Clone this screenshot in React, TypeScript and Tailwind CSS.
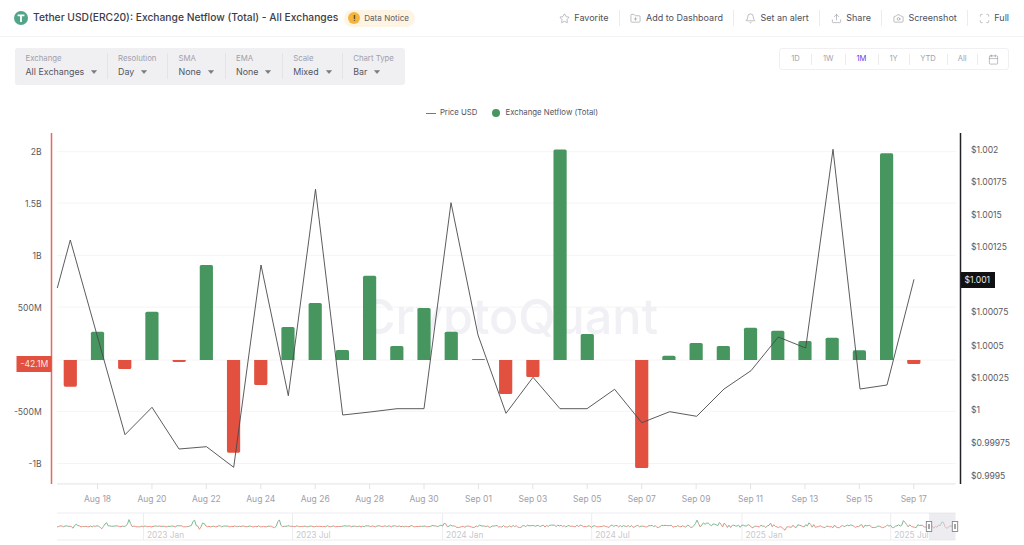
import { Star, FolderPlus, Bell, Upload, Camera, Scan, Calendar } from "lucide-react";

const X0 = 70.3;
const STEP = 27.21;
const ZERO = 360;
const bars: [number, number][] = [
  [0, 386.7], [1, 331.7], [2, 369], [3, 311.7], [4, 362], [5, 265], [6, 452.7], [7, 385],
  [8, 327], [9, 303], [10, 350], [11, 275.7], [12, 346], [13, 308], [14, 331.7], [15, 359],
  [16, 394], [17, 377], [18, 149.5], [19, 334], [21, 468], [22, 355.7], [23, 343], [24, 346],
  [25, 327.7], [26, 330.7], [27, 341], [28, 337.7], [29, 350.3], [30, 153.3], [31, 364],
];
const price: [number, number][] = [
  [57.3, 288], [70.3, 240], [125, 434.7], [152, 407.3], [179, 449], [206.5, 446.7], [233.7, 467.3],
  [261, 265], [288.3, 395.7], [315.5, 189.3], [342.7, 415], [370, 412], [397, 408.7], [424, 408.7],
  [451, 202.7], [478, 335], [506, 413.3], [533, 377.3], [560, 408.7], [587, 408.7], [614.6, 389.3],
  [641.8, 422.7], [669.7, 411.7], [696.7, 416.3], [724, 389], [751, 370.7], [778.3, 337],
  [805.7, 348], [833, 149.3], [860, 389], [887, 385], [914, 279.3],
];
const leftTicks: [string, number][] = [
  ["2B", 152], ["1.5B", 203.5], ["1B", 255.5], ["500M", 308], ["-500M", 412], ["-1B", 464],
];
const gridYs = [151.7, 203, 255.3, 307, 360, 411.3, 463.5];
const rightTicks: [string, number][] = [
  ["$1.002", 149.7], ["$1.00175", 182], ["$1.0015", 214.5], ["$1.00125", 247.3],
  ["$1.00075", 312.3], ["$1.0005", 345.7], ["$1.00025", 378.3], ["$1", 410.3], ["$0.99975", 443.3], ["$0.9995", 476],
];
const dates = ["Aug 18", "Aug 20", "Aug 22", "Aug 24", "Aug 26", "Aug 28", "Aug 30", "Sep 01", "Sep 03", "Sep 05", "Sep 07", "Sep 09", "Sep 11", "Sep 13", "Sep 15", "Sep 17"];
const miniLabels: [string, number][] = [
  ["2023 Jan", 143.5], ["2023 Jul", 292.5], ["2024 Jan", 442.6], ["2024 Jul", 591.7], ["2025 Jan", 742], ["2025 Jul", 890.7],
];
const spikes: [number, number][] = [
  [73, -2], [76, 2.5], [106, 3.5], [102, -2], [129, 7], [194, 7], [200, -3], [203, 4], [279, 7], [274, -1.5],
  [445, 2.5], [697, 6], [703, 5], [708, 4], [713, 3.5], [719, 3], [725, 3], [785, -3], [770, 3.5], [810, 3], [904, 6], [934, -3], [943, 5], [948, -2], [953, 3],
];

function miniPaths() {
  let seed = 17;
  const rnd = () => {
    seed = (seed * 16807) % 2147483647;
    return seed / 2147483647 - 0.5;
  };
  let green = "";
  let red = "";
  let prev: [number, number] | null = null;
  for (let x = 57; x <= 955; x += 1.6) {
    const amp = x < 430 ? 1.2 : x < 690 ? 2.4 : 3.4;
    let v = rnd() * amp;
    for (const [sx, sv] of spikes) v += sv * Math.exp(-((x - sx) * (x - sx)) / 2.5);
    const pt: [number, number] = [x, 526.3 - v];
    if (prev) {
      const seg = `M${prev[0].toFixed(1)} ${prev[1].toFixed(1)}L${pt[0].toFixed(1)} ${pt[1].toFixed(1)}`;
      if (v >= 0) green += seg;
      else red += seg;
    }
    prev = pt;
  }
  return { green, red };
}

function Caret() {
  return (
    <svg width="6" height="4" viewBox="0 0 6 4" className="shrink-0">
      <path d="M0.4 0.4H5.6L3 3.6Z" fill="#77777f" stroke="#77777f" strokeWidth="0.5" strokeLinejoin="round" />
    </svg>
  );
}

function Filter({ label, value, cls, last }: { label: string; value: string; cls: string; last?: boolean }) {
  return (
    <div className={`${cls} h-[26px] flex flex-col pl-[10.5px] ${last ? "" : "border-r border-[#e4e4e8]"}`}>
      <span className="text-[7.8px] leading-[10px] text-[#a0a0aa] whitespace-nowrap">{label}</span>
      <span className="mt-[3px] flex items-center gap-[7px] text-[8.9px] leading-[11px] text-[#55555f] whitespace-nowrap">
        {value}
        <Caret />
      </span>
    </div>
  );
}

function Action({ icon, text, last }: { icon: React.ReactNode; text: string; last?: boolean }) {
  return (
    <div className="flex items-center">
      <div className="flex items-center gap-[4.5px] text-[9px] text-[#4f4f59] whitespace-nowrap">
        {icon}
        {text}
      </div>
      {!last && <div className="w-px h-[16px] bg-[#ececef] mx-[10.5px]" />}
    </div>
  );
}

function Range({ t, cls, active, last }: { t: string; cls: string; active?: boolean; last?: boolean }) {
  return (
    <div className={`${cls} h-[11px] flex items-center justify-center text-[7.6px] ${active ? "text-[#5a43ee]" : "text-[#a3a3ad]"} ${last ? "" : "border-r border-[#ececef]"}`}>
      {t}
    </div>
  );
}

export default function App() {
  const { green, red } = miniPaths();
  const iconCls = "w-[11px] h-[11px] text-[#8a8a92] shrink-0";
  return (
    <div className="w-[1024px] h-[545px] overflow-hidden bg-white font-[Inter,sans-serif]">
      <header className="h-[37px] border-b border-[#f3f3f5] flex items-center justify-between pl-[14px] pr-[15px]">
        <div className="flex items-center">
          <svg width="14" height="14" viewBox="0 0 14 14" className="shrink-0">
            <circle cx="7" cy="7" r="7" fill="#53a588" />
            <path d="M3.6 3.6H10.4V5.2H7.9V11H6.1V5.2H3.6Z" fill="#fff" />
          </svg>
          <span className="ml-[5px] text-[10.27px] font-medium text-[#3d3d47] whitespace-nowrap">
            Tether USD(ERC20): Exchange Netflow (Total) - All Exchanges
          </span>
          <div className="ml-[6px] h-[17px] w-[71px] rounded-full bg-[#fdf4e4] flex items-center pl-[4px] gap-[4px]">
            <span className="w-[12px] h-[12px] rounded-full bg-[#f5b53c] text-[#5a4210] text-[8px] font-bold leading-[12px] text-center">!</span>
            <span className="text-[8.1px] text-[#5d5d63] whitespace-nowrap">Data Notice</span>
          </div>
        </div>
        <div className="flex items-center">
          <Action icon={<Star className={iconCls} strokeWidth={1.2} />} text="Favorite" />
          <Action icon={<FolderPlus className={iconCls} strokeWidth={1.2} />} text="Add to Dashboard" />
          <Action icon={<Bell className={iconCls} strokeWidth={1.2} />} text="Set an alert" />
          <Action icon={<Upload className={iconCls} strokeWidth={1.2} />} text="Share" />
          <Action icon={<Camera className={iconCls} strokeWidth={1.2} />} text="Screenshot" />
          <Action icon={<Scan className={iconCls} strokeWidth={1.2} />} text="Full" last />
        </div>
      </header>

      <div className="mt-[11px] flex items-start justify-between px-[15px]">
        <div className="h-[37px] w-[390px] rounded-[3px] bg-[#f0f0f3] flex items-start pt-[5px]">
          <Filter label="Exchange" value="All Exchanges" cls="w-[92.5px]" />
          <Filter label="Resolution" value="Day" cls="w-[60.5px]" />
          <Filter label="SMA" value="None" cls="w-[57.5px]" />
          <Filter label="EMA" value="None" cls="w-[57.2px]" />
          <Filter label="Scale" value="Mixed" cls="w-[60px]" />
          <Filter label="Chart Type" value="Bar" cls="w-[62px]" last />
        </div>
        <div className="h-[22px] w-[230px] rounded-[3px] border border-[#f0f0f3] flex items-center">
          <Range t="1D" cls="w-[32px]" />
          <Range t="1W" cls="w-[33.5px]" />
          <Range t="1M" cls="w-[33px]" active />
          <Range t="1Y" cls="w-[31px]" />
          <Range t="YTD" cls="w-[38px]" />
          <Range t="All" cls="w-[30.5px]" />
          <div className="flex-1 flex justify-center">
            <Calendar className="w-[11px] h-[11px] text-[#8a8a92]" strokeWidth={1.2} />
          </div>
        </div>
      </div>

      <div className="mt-[22px] h-[12px] flex items-center justify-center text-[7.8px] text-[#55555f]">
        <span className="w-[10px] h-px bg-[#77777f]" />
        <span className="ml-[4px]">Price USD</span>
        <span className="ml-[15px] w-[8px] h-[8px] rounded-full bg-[#47965f]" />
        <span className="ml-[5px]">Exchange Netflow (Total)</span>
      </div>

      <svg width="1024" height="426" viewBox="0 119 1024 426" className="block">
        {gridYs.map((y) => (
          <line key={y} x1="57" x2="955.5" y1={y} y2={y} stroke="#f4f4f6" strokeWidth="1" />
        ))}
        <text x="360" y="334" fontSize="48.5" fontWeight="500" fill="#f0f0f5">CryptoQuant</text>
        {bars.map(([i, y]) => {
          const x = X0 + i * STEP - 6.6;
          const up = y < ZERO;
          const top = up ? y : ZERO;
          const h = Math.abs(y - ZERO);
          const r = Math.min(1.6, h);
          const d = up
            ? `M${x} ${ZERO}V${top + r}Q${x} ${top} ${x + r} ${top}H${x + 13.2 - r}Q${x + 13.2} ${top} ${x + 13.2} ${top + r}V${ZERO}Z`
            : `M${x} ${ZERO}V${y - r}Q${x} ${y} ${x + r} ${y}H${x + 13.2 - r}Q${x + 13.2} ${y} ${x + 13.2} ${y - r}V${ZERO}Z`;
          return <path key={i} d={d} fill={up ? "#47965f" : "#e25040"} />;
        })}
        <polyline
          points={price.map((p) => p.join(",")).join(" ")}
          fill="none"
          stroke="#4a4a4e"
          strokeWidth="0.9"
          strokeLinejoin="miter"
        />

        <line x1="51.5" x2="51.5" y1="133" y2="484" stroke="#e8685c" strokeWidth="1.5" />
        <line x1="960.5" x2="960.5" y1="133" y2="484" stroke="#222226" strokeWidth="1.5" />
        <line x1="57" x2="955.5" y1="483.8" y2="483.8" stroke="#e8e8ec" strokeWidth="1.2" />

        <g fontSize="8.6" fill="#5a5a62">
          {leftTicks.map(([t, y]) => (
            <text key={t} x="41.7" y={y + 3} textAnchor="end">{t}</text>
          ))}
          {rightTicks.map(([t, y]) => (
            <text key={t} x="971" y={y + 3}>{t}</text>
          ))}
        </g>
        <rect x="16.5" y="356" width="35" height="16" fill="#e25040" />
        <text x="48.3" y="367" textAnchor="end" fontSize="8.6" fill="#fbe4e1">-42.1M</text>
        <rect x="961" y="272" width="34" height="16" fill="#111114" />
        <text x="964.5" y="283" fontSize="8.6" fill="#e8e8ea">$1.001</text>

        {dates.map((d, i) => {
          const x = 97.5 + i * 54.42;
          return (
            <g key={d}>
              <line x1={x} x2={x} y1="484" y2="489" stroke="#e2e2e6" strokeWidth="1" />
              <text x={x} y="502" fontSize="8.5" fill="#a0a0aa" textAnchor="middle">{d}</text>
            </g>
          );
        })}

        <line x1="57" x2="955.5" y1="513" y2="513" stroke="#ededf0" strokeWidth="1" />
        <line x1="57" x2="955.5" y1="540" y2="540" stroke="#ededf0" strokeWidth="1" />
        {miniLabels.map(([t, x]) => (
          <g key={t}>
            <line x1={x} x2={x} y1="513" y2="540" stroke="#ededf0" strokeWidth="1" />
            <text x={x + 3.5} y="538" fontSize="8.3" fill="#c8c8ce">{t}</text>
          </g>
        ))}
        <path d={green} fill="none" stroke="#7db893" strokeWidth="1" />
        <path d={red} fill="none" stroke="#ee8f84" strokeWidth="1" />
        <rect x="929" y="513" width="26.5" height="27" fill="#dcdce6" fillOpacity="0.55" />
        <rect x="926.3" y="521.5" width="5.4" height="10" fill="#fff" stroke="#85858c" strokeWidth="0.9" />
        <rect x="928" y="524" width="2" height="5" fill="#a5a5ab" />
        <rect x="952.3" y="521.5" width="5.4" height="10" fill="#fff" stroke="#85858c" strokeWidth="0.9" />
        <rect x="954" y="524" width="2" height="5" fill="#a5a5ab" />
      </svg>
    </div>
  );
}
